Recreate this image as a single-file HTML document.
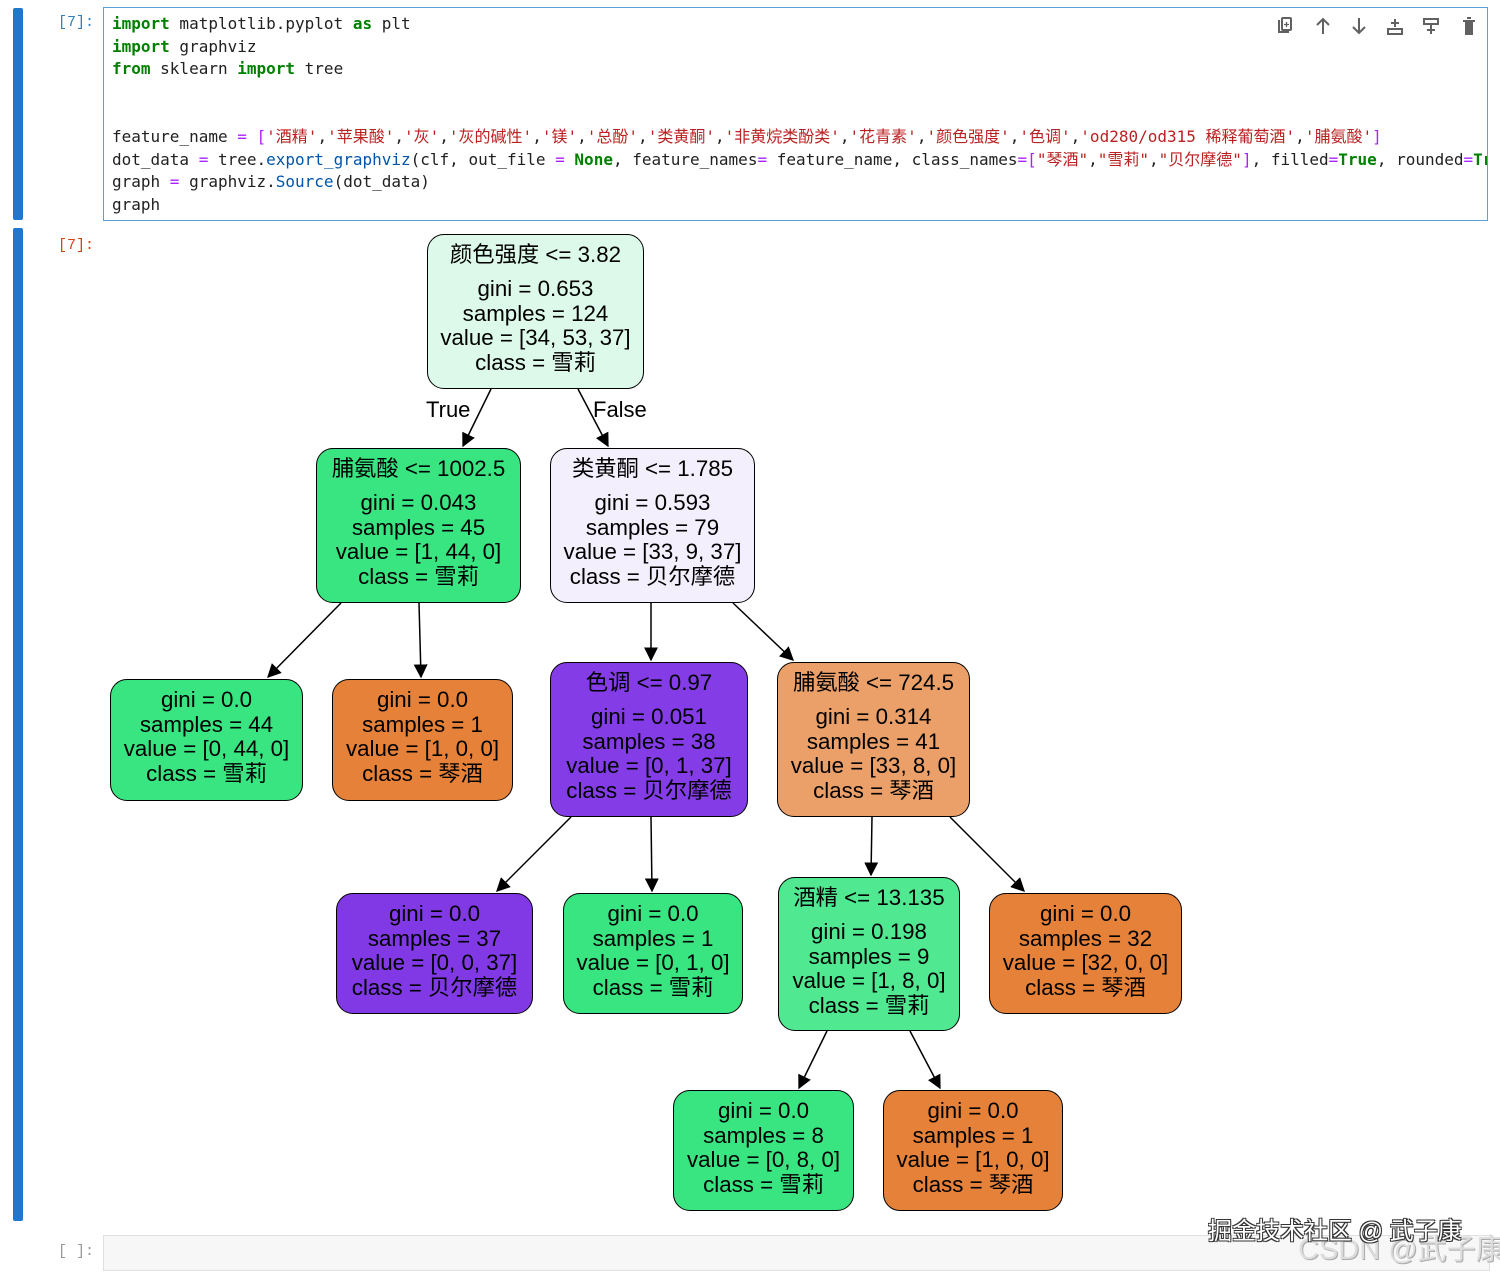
<!DOCTYPE html>
<html><head><meta charset="utf-8"><style>
body{margin:0;width:1500px;height:1272px;background:#fff;position:relative;overflow:hidden;font-family:"Liberation Sans","Noto Sans CJK SC",sans-serif}
.bar{position:absolute;left:13px;width:10px;background:#1f77d0;border-radius:2px}
.pr{position:absolute;font:15px "Liberation Mono","Noto Sans CJK SC",monospace}
.in{position:absolute;left:103px;top:7px;width:1383px;height:212px;border:1px solid #5d9fdb;background:#fff;overflow:hidden}
.code{position:absolute;left:8px;white-space:pre;font:16px "DejaVu Sans Mono","Noto Sans CJK SC",monospace;color:#212121;line-height:22.6px}
.k{color:#008000;font-weight:bold}.o{color:#aa22ff}.s{color:#ba2121}.f{color:#0055aa}
.n{position:absolute;box-sizing:border-box;border:1.6px solid #000;border-radius:17px;text-align:center;font-size:22.3px;line-height:24.5px;padding-top:8px;color:#000;white-space:nowrap}
.n .h{margin-bottom:9.5px}
.g{background:#39e581}.o2{background:#e58139}.p{background:#8139e5}
.lbl{position:absolute;font-size:22px}
</style></head><body>
<div class="bar" style="top:8px;height:212px"></div>
<div class="bar" style="top:228px;height:993px"></div>
<div class="pr" style="left:58px;top:14px;color:#307fc1">[7]:</div>
<div class="pr" style="left:58px;top:237px;color:#d84315">[7]:</div>
<div class="pr" style="left:58px;top:1243px;color:#999">[ ]:</div>
<div class="in">
<div class="code" style="top:5px"><span class="k">import</span> matplotlib.pyplot <span class="k">as</span> plt
<span class="k">import</span> graphviz
<span class="k">from</span> sklearn <span class="k">import</span> tree</div>
<div class="code" style="top:118px"><span>feature_name </span><span class="o">=</span> <span class="o">[</span><span class="s">'酒精'</span>,<span class="s">'苹果酸'</span>,<span class="s">'灰'</span>,<span class="s">'灰的碱性'</span>,<span class="s">'镁'</span>,<span class="s">'总酚'</span>,<span class="s">'类黄酮'</span>,<span class="s">'非黄烷类酚类'</span>,<span class="s">'花青素'</span>,<span class="s">'颜色强度'</span>,<span class="s">'色调'</span>,<span class="s">'od280/od315 稀释葡萄酒'</span>,<span class="s">'脯氨酸'</span><span class="o">]</span>
dot_data <span class="o">=</span> tree.<span class="f">export_graphviz</span>(clf, out_file <span class="o">=</span> <span class="k">None</span>, feature_names<span class="o">=</span> feature_name, class_names<span class="o">=[</span><span class="s">"琴酒"</span>,<span class="s">"雪莉"</span>,<span class="s">"贝尔摩德"</span><span class="o">]</span>, filled<span class="o">=</span><span class="k">True</span>, rounded<span class="o">=</span><span class="k">True</span>)
graph <span class="o">=</span> graphviz.<span class="f">Source</span>(dot_data)
graph</div>
<svg style="position:absolute;left:1170px;top:6px" width="210" height="24" fill="none" stroke="#616161" stroke-width="2">
<rect x="8" y="4" width="9" height="12" rx="1"/><path d="M5 6v12h10"/><path d="M12.5 8v5M10 10.5h5" stroke-width="1.3"/>
<path d="M49 20V5M43 11l6-6 6 6"/>
<path d="M85 4v15M79 13l6 6 6-6"/>
<path d="M114 15h14v5h-14zM121 5v8M117 9h8"/>
<path d="M150 5h14v5h-14zM157 10v10M153 16h8"/>
<path d="M189 7h12M192 7v13h6V7" fill="#616161"/><path d="M193 4h4"/>
</svg>
</div>
<div style="position:absolute;left:103px;top:1235px;width:1385px;height:34px;background:#f7f7f7;border:1px solid #e0e0e0"></div>

<svg style="position:absolute;left:0;top:0" width="1500" height="1272">
<defs><marker id="a" markerWidth="14" markerHeight="14" refX="9" refY="5" orient="auto" markerUnits="userSpaceOnUse" viewBox="0 0 10 10"><path d="M0 0L10 5L0 10z" fill="#000"/></marker></defs>
<g stroke="#000" stroke-width="1.5">
<line x1="491" y1="389" x2="463" y2="446" marker-end="url(#a)"/>
<line x1="578" y1="389" x2="608" y2="446" marker-end="url(#a)"/>
<line x1="341" y1="603" x2="268" y2="677" marker-end="url(#a)"/>
<line x1="419" y1="603" x2="421" y2="677" marker-end="url(#a)"/>
<line x1="651" y1="603" x2="651" y2="660" marker-end="url(#a)"/>
<line x1="733" y1="603" x2="793" y2="660" marker-end="url(#a)"/>
<line x1="571" y1="817" x2="497" y2="891" marker-end="url(#a)"/>
<line x1="651" y1="817" x2="652" y2="891" marker-end="url(#a)"/>
<line x1="872" y1="817" x2="871" y2="875" marker-end="url(#a)"/>
<line x1="950" y1="817" x2="1024" y2="891" marker-end="url(#a)"/>
<line x1="827" y1="1031" x2="799" y2="1088" marker-end="url(#a)"/>
<line x1="910" y1="1031" x2="940" y2="1088" marker-end="url(#a)"/>
</g></svg>
<div class="lbl" style="left:426px;top:397px">True</div>
<div class="lbl" style="left:593px;top:397px">False</div>

<div class="n" style="left:427px;top:234px;width:217px;height:155px;background:#ddf9ea"><div class="h">颜色强度 &lt;= 3.82</div>gini = 0.653<br>samples = 124<br>value = [34, 53, 37]<br>class = 雪莉</div>
<div class="n g" style="left:316px;top:448px;width:205px;height:155px"><div class="h">脯氨酸 &lt;= 1002.5</div>gini = 0.043<br>samples = 45<br>value = [1, 44, 0]<br>class = 雪莉</div>
<div class="n" style="left:550px;top:448px;width:205px;height:155px;background:#f4effd"><div class="h">类黄酮 &lt;= 1.785</div>gini = 0.593<br>samples = 79<br>value = [33, 9, 37]<br>class = 贝尔摩德</div>
<div class="n g" style="left:110px;top:679px;width:193px;height:122px">gini = 0.0<br>samples = 44<br>value = [0, 44, 0]<br>class = 雪莉</div>
<div class="n o2" style="left:332px;top:679px;width:181px;height:122px">gini = 0.0<br>samples = 1<br>value = [1, 0, 0]<br>class = 琴酒</div>
<div class="n" style="left:550px;top:662px;width:198px;height:155px;background:#843de6"><div class="h">色调 &lt;= 0.97</div>gini = 0.051<br>samples = 38<br>value = [0, 1, 37]<br>class = 贝尔摩德</div>
<div class="n" style="left:777px;top:662px;width:193px;height:155px;background:#eba069"><div class="h">脯氨酸 &lt;= 724.5</div>gini = 0.314<br>samples = 41<br>value = [33, 8, 0]<br>class = 琴酒</div>
<div class="n p" style="left:336px;top:893px;width:197px;height:121px">gini = 0.0<br>samples = 37<br>value = [0, 0, 37]<br>class = 贝尔摩德</div>
<div class="n g" style="left:563px;top:893px;width:180px;height:121px">gini = 0.0<br>samples = 1<br>value = [0, 1, 0]<br>class = 雪莉</div>
<div class="n" style="left:778px;top:877px;width:182px;height:154px;background:#50e890"><div class="h">酒精 &lt;= 13.135</div>gini = 0.198<br>samples = 9<br>value = [1, 8, 0]<br>class = 雪莉</div>
<div class="n o2" style="left:989px;top:893px;width:193px;height:121px">gini = 0.0<br>samples = 32<br>value = [32, 0, 0]<br>class = 琴酒</div>
<div class="n g" style="left:673px;top:1090px;width:181px;height:121px">gini = 0.0<br>samples = 8<br>value = [0, 8, 0]<br>class = 雪莉</div>
<div class="n o2" style="left:883px;top:1090px;width:180px;height:121px">gini = 0.0<br>samples = 1<br>value = [1, 0, 0]<br>class = 琴酒</div>

<div style="position:absolute;left:1298px;top:1226px;font-size:29px;color:#ddd;white-space:nowrap;text-shadow:1px 1px 0 #aaa">CSDN @武子康</div>
<div style="position:absolute;left:1208px;top:1211px;font-size:24px;color:#fff;white-space:nowrap;text-shadow:-1px -1px 0 #333,1px 1px 0 #333,1px -1px 0 #333,-1px 1px 0 #333">掘金技术社区 @ 武子康</div>
</body></html>
